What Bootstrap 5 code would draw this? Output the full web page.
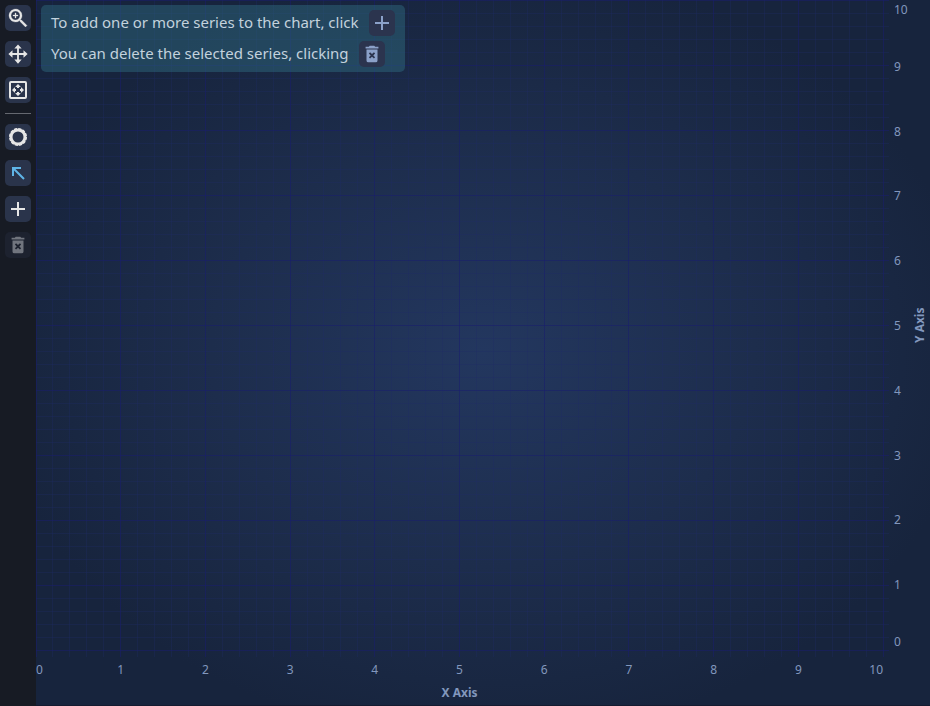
<!DOCTYPE html>
<html lang="en">
<head>
<meta charset="utf-8">
<meta name="viewport" content="width=device-width, initial-scale=1">
<title>Chart series</title>
<link href="https://cdn.jsdelivr.net/npm/bootstrap@5.3.0/dist/css/bootstrap.min.css" rel="stylesheet">
<style>
body { font-family: "Noto Sans", "Open Sans", sans-serif; background: #171b24; }
.tool-bar { width: 36px; background: #171b24; gap: 10px; padding: 5px; }
.tool-btn { width: 26px; height: 26px; border: 0; border-radius: 5px; background: #2a344b; color: #e6e6e6; }
.tool-btn.active-tool { color: #5fb4e6; }
.tool-btn:disabled { background: #1d222f; color: #71757e; }
.tool-btn svg, .hint-btn svg { flex: none; }
.tool-rule { height: 1px; background: #656870; }
.chart-area { background: radial-gradient(ellipse at center, #23375f 0%, #1d2d4c 43%, #17243d 78%); border-bottom: 1px solid #151b30; }
.plot-grid { overflow: visible; }
.grid-minor { stroke: #202a66; stroke-opacity: .32; }
.grid-major { stroke: #191c70; stroke-opacity: .52; }
.y-axis { width: 47px; color: #8297bd; font-size: 12px; line-height: 16px; }
.x-axis { height: 55px; margin-right: 47px; color: #8297bd; font-size: 12px; line-height: 16px; padding-top: 12px; gap: 7px; }
.tick-label { flex: 1 1 0; min-width: 0; min-height: 0; }
.tick-label:first-child, .tick-label:last-child { flex-grow: .5; }
.y-labels { padding-left: 11px; }
.y-labels .tick-label { display: flex; align-items: center; }
.y-labels .tick-label:first-child { align-items: flex-start; padding-top: 2px; }
.y-labels .tick-label:last-child { align-items: flex-end; }
.x-labels .tick-label { text-align: center; }
.x-labels .tick-label:first-child { text-align: left; }
.x-labels .tick-label:last-child { text-align: right; }
.y-title { writing-mode: vertical-rl; transform: rotate(180deg); width: 18px; }
.hint-box { top: 5px; left: 5px; padding: 5px 10px; border-radius: 5px; background: rgba(48, 110, 130, .45); color: #c3d2dd; font-size: 15px; line-height: 24px; gap: 5px; }
.hint-row { gap: 10px; }
.hint-btn { width: 26px; height: 26px; border-radius: 5px; background: #2b344e; color: #8ba1c9; }
</style>
<script src="https://cdn.jsdelivr.net/npm/bootstrap@5.3.0/dist/js/bootstrap.bundle.min.js"></script>
</head>
<body class="vh-100 d-flex overflow-hidden">
<svg class="d-none" aria-hidden="true">
  <symbol id="icon-plus" viewBox="0 0 24 24"><path fill="none" stroke="currentColor" stroke-width="2" d="M12 5v14M5 12h14"/></symbol>
  <symbol id="icon-trash" viewBox="0 0 24 24"><path fill="currentColor" fill-rule="evenodd" d="M5 4h3.5l1-1h5l1 1H19v2H5zM6 7h12v12a2 2 0 0 1-2 2H8a2 2 0 0 1-2-2zM8.600 11.400l2 2.100-2 2.100 1.300 1.300 2.100-2 2.100 2 1.300-1.300-2-2.100 2-2.100-1.300-1.300-2.100 2-2.100-2z"/></symbol>
</svg>

<nav class="tool-bar d-flex flex-column flex-shrink-0" aria-label="Chart tools">
  <button type="button" class="tool-btn d-flex align-items-center justify-content-center p-0" aria-label="Zoom">
    <svg width="24" height="24" viewBox="0 0 24 24" fill="currentColor" stroke="currentColor" stroke-width=".3"><path d="M15.500 14l5.500 5.500-1.500 1.500-5.500-5.500v-.79l-.27-.28A6.500 6.500 0 1 1 16 9.500c0 1.610-.59 3.090-1.570 4.230l.28.27zM9.500 14a4.500 4.500 0 1 0 0-9 4.500 4.500 0 0 0 0 9zM12 10h-2v2H9v-2H7V9h2V7h1v2h2z"/></svg>
  </button>
  <button type="button" class="tool-btn d-flex align-items-center justify-content-center p-0" aria-label="Pan">
    <svg width="22" height="22" viewBox="0 0 24 24" fill="currentColor"><path d="M13 11h5V8l4.500 4-4.500 4v-3h-5v5h3l-4 4.500L8 18h3v-5H6v3l-4.500-4L6 8v3h5V6H8l4-4.500L16 6h-3z"/></svg>
  </button>
  <button type="button" class="tool-btn d-flex align-items-center justify-content-center p-0" aria-label="Zoom to fit">
    <svg width="20" height="20" viewBox="0 0 20 20" fill="currentColor"><rect x="2" y="2" width="16" height="16" rx="1" fill="none" stroke="currentColor" stroke-width="2"/><path d="M10 4l2.500 2.500V7h-5v-.5zM9 7h2v1H9zM10 16l2.500-2.500V13h-5v.5zM9 12h2v1H9zM4 10l2.500-2.500H7v5h-.5zM7 9h1v2H7zM16 10l-2.500-2.500H13v5h.5zM12 9h1v2h-1z"/></svg>
  </button>
  <div class="tool-rule"></div>
  <button type="button" class="tool-btn d-flex align-items-center justify-content-center p-0" aria-label="Point markers">
    <svg width="20" height="20" viewBox="0 0 20 20" fill="none" stroke="currentColor"><circle cx="10" cy="10" r="7" stroke-width="3"/><circle cx="10" cy="10" r="8" stroke-width="2" stroke-dasharray="3 1.188"/></svg>
  </button>
  <button type="button" class="tool-btn active-tool d-flex align-items-center justify-content-center p-0" aria-label="Select" aria-pressed="true">
    <svg width="16" height="16" viewBox="0 0 16 16" fill="none" stroke="currentColor" stroke-width="2"><path d="M3 11V3h8M3 3l11 11"/></svg>
  </button>
  <button type="button" class="tool-btn d-flex align-items-center justify-content-center p-0" aria-label="Add series">
    <svg width="24" height="24"><use href="#icon-plus"/></svg>
  </button>
  <button type="button" class="tool-btn d-flex align-items-center justify-content-center p-0" aria-label="Delete series" disabled>
    <svg width="22" height="22"><use href="#icon-trash"/></svg>
  </button>
</nav>

<main class="chart-area flex-grow-1 d-flex flex-column position-relative">
  <div class="flex-grow-1 d-flex">
    <div class="flex-grow-1 position-relative">
      <svg class="plot-grid position-absolute top-0 start-0 w-100 h-100" id="plotGrid" shape-rendering="crispEdges" aria-hidden="true"></svg>
    </div>
    <div class="y-axis d-flex flex-shrink-0">
      <div class="y-labels d-flex flex-column flex-grow-1" id="yLabels"></div>
      <div class="y-title fw-bold text-center">Y Axis</div>
    </div>
  </div>
  <div class="x-axis d-flex flex-column">
    <div class="x-labels d-flex" id="xLabels"></div>
    <div class="fw-bold text-center">X Axis</div>
  </div>

  <div class="hint-box position-absolute d-flex flex-column">
    <div class="hint-row d-flex">To add one or more series to the chart, click
      <span class="hint-btn d-flex align-items-center justify-content-center"><svg width="24" height="24"><use href="#icon-plus"/></svg></span>
    </div>
    <div class="hint-row d-flex">You can delete the selected series, clicking
      <span class="hint-btn d-flex align-items-center justify-content-center"><svg width="22" height="22"><use href="#icon-trash"/></svg></span>
    </div>
  </div>
</main>

<script>
const grid = document.getElementById('plotGrid');
const steps = 50;

function addLine(kind, x1, y1, x2, y2) {
  const line = document.createElementNS('http://www.w3.org/2000/svg', 'line');
  line.setAttribute('class', kind);
  line.setAttribute('x1', x1 + '%');
  line.setAttribute('y1', y1 + '%');
  line.setAttribute('x2', x2 + '%');
  line.setAttribute('y2', y2 + '%');
  grid.appendChild(line);
}

for (const major of [false, true]) {
  for (let i = 0; i <= steps; i++) {
    if ((i % 5 === 0) !== major) continue;
    const p = i * 100 / steps;
    const kind = major ? 'grid-major' : 'grid-minor';
    // Grid lines run slightly past the plot edge to form the axis ticks.
    addLine(kind, p, 0, p, 101);
    addLine(kind, 0, p, 100.7, p);
  }
}

function addLabels(id, values) {
  for (const v of values) {
    const label = document.createElement('span');
    label.className = 'tick-label';
    label.textContent = v;
    document.getElementById(id).appendChild(label);
  }
}
const values = Array.from({ length: 11 }, (_, i) => i);
addLabels('xLabels', values);
addLabels('yLabels', [...values].reverse());
</script>
</body>
</html>
